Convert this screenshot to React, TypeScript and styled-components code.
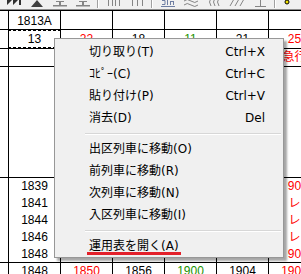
import React from 'react';
import styled, {createGlobalStyle} from 'styled-components';

const GlobalStyle = createGlobalStyle`
  html, body {
    margin: 0;
    padding: 0;
    background: #ffffff;
  }
  body {
    width: 301px;
    height: 274px;
    overflow: hidden;
    font-family: "Liberation Sans", Arial, sans-serif;
  }
`;

const Screen = styled.div`
  position: relative;
  width: 301px;
  height: 274px;
  overflow: hidden;
  background: #ffffff;
`;

const Toolbar = styled.div`
  height: 9px;
  padding-left: 2px;
  display: flex;
  align-items: flex-end;
  overflow: hidden;
  background: #f0f0f0;
  border-bottom: 1px solid #8c8c8c;
`;

const ToolButton = styled.div`
  flex: none;
  width: 23px;
  height: 20px;
  display: flex;
  align-items: center;
  justify-content: center;
`;

const ToolSep = styled.div`
  flex: none;
  width: 8px;
  height: 9px;
  display: flex;
  justify-content: center;
  &::before {
    content: '';
    width: 1px;
    height: 8px;
    background: #a0a0a0;
    border-right: 1px solid #ffffff;
  }
`;

const Sheet = styled.div`
  display: grid;
  grid-template-columns: 9px repeat(6, 52px);
  border-top: 1px solid #000;
  font-family: "Liberation Sans", Arial, "Noto Sans CJK JP", sans-serif;
  font-size: 12px;
`;

const Cell = styled.div<{$pad: number; $color: string; $focus?: boolean}>`
  position: relative;
  box-sizing: border-box;
  padding-top: ${p => p.$pad}px;
  border-right: 1px solid #000;
  border-bottom: 1px solid #000;
  color: ${p => p.$color};
  text-align: center;
  line-height: 17px;
  white-space: nowrap;
  overflow: hidden;
  &::after {
    content: '';
    display: ${p => (p.$focus ? 'block' : 'none')};
    position: absolute;
    left: -1px;
    right: -1px;
    top: 0;
    bottom: 0;
    border: 1px dashed #000;
  }
`;

const Menu = styled.div`
  position: absolute;
  left: 54px;
  top: 38px;
  width: 230px;
  box-sizing: border-box;
  padding: 2px 2px 0;
  background: #f0f0f0;
  border: 1px solid #979797;
  box-shadow: 3px 3px 2px rgba(0, 0, 0, 0.35);
  font-family: "DejaVu Sans", "Noto Sans CJK JP", sans-serif;
  font-size: 12px;
  color: #000;
`;

const MenuItem = styled.div`
  height: 22px;
  display: flex;
  align-items: center;
  justify-content: space-between;
  padding: 0 16px 0 32px;
  white-space: nowrap;
`;

const Label = styled.span<{$marked?: boolean}>`
  position: relative;
  display: inline-block;
  line-height: 14px;
  &::after {
    content: '';
    display: ${p => (p.$marked ? 'block' : 'none')};
    position: absolute;
    left: -2px;
    right: -2px;
    bottom: -2px;
    height: 3px;
    background: #e3202a;
  }
`;

const Shortcut = styled.span`
  line-height: 14px;
`;

const MenuSep = styled.div`
  height: 1px;
  margin: 4px 0 3px 28px;
  background: #d7d7d7;
  border-bottom: 1px solid #ffffff;
`;

const gray = '#858585';

const ToolIcon = ({kind}: {kind: string}) => {
  return (
    <svg width="16" height="16" viewBox="0 0 16 16">
      {kind === 'end' && (
        <g fill="#303030">
          <path d="M1 2 L7 8 L1 14 Z M7 2 L13 8 L7 14 Z" />
          <rect x="13" y="2" width="2" height="12" />
        </g>
      )}
      {kind === 'up' && <path d="M8 9 L14 16 L2 16 Z" fill="#404040" />}
      {kind === 'stack' && (
        <g fill={gray}>
          <rect x="4" y="10" width="8" height="1" />
          <rect x="7" y="10" width="2" height="4" />
          <rect x="1" y="14" width="14" height="1.5" />
        </g>
      )}
      {kind === 'bars4' && (
        <path d="M2.5 4v11 M6.5 4v11 M9.5 4v11 M13.5 4v11" stroke={gray} strokeWidth="1" />
      )}
      {kind === 'bars3' && (
        <path d="M3.5 4v11 M8.5 4v11 M13.5 4v11 M3 4.5h11" stroke={gray} strokeWidth="1" />
      )}
      {kind === 'lines' && (
        <g stroke="#6f7fa3" strokeWidth="1" fill="none">
          <path d="M2 9.5h3v4h-3 M7.5 8v6 M10.5 10v4 M13.5 10v4 M10 10.5h4" />
          <path d="M1 15.5h14" />
        </g>
      )}
      {kind === 'wave' && (
        <path d="M1 10q3 -3 7 0t7 0 M1 14q3 -3 7 0t7 0" stroke={gray} strokeWidth="1" fill="none" />
      )}
      {kind === 'arcs' && (
        <path d="M5 7q-3 4 0 8 M9 7q-3 4 0 8 M13 7q-3 4 0 8" stroke={gray} strokeWidth="1" fill="none" />
      )}
      {kind === 'slash' && (
        <path d="M1 15L5 8 M6 15L10 8 M11 15L15 8" stroke={gray} strokeWidth="1" fill="none" />
      )}
      {kind === 'tee' && <path d="M8.5 5v10 M3 15.5h11" stroke={gray} strokeWidth="1" fill="none" />}
      {kind === 'dot' && <circle cx="4" cy="11" r="2" fill="#f2e200" stroke="#000" strokeWidth="1" />}
    </svg>
  );
};

const tools = ['end', 'up', 'stack', 'stack', '|', 'bars4', 'bars3', '|', 'lines', 'wave', 'arcs', 'slash', 'tee', '|', 'dot'];

const toneColor: Record<string, string> = {
  k: '#000000',
  r: '#ff0000',
  g: '#1a9200',
};

interface CellData {
  lines: string[];
  tone?: string;
  focus?: boolean;
}

interface RowData {
  height: number;
  pad: number;
  cells: CellData[];
}

const e: CellData = {lines: []};

const sheetRows: RowData[] = [
  {height: 19, pad: 2, cells: [e, {lines: ['1813A']}, e, e, e, e, e]},
  {
    height: 19,
    pad: 1,
    cells: [
      e,
      {lines: ['13'], focus: true},
      {lines: ['22'], tone: 'r'},
      {lines: ['18']},
      {lines: ['11'], tone: 'g'},
      {lines: ['21']},
      {lines: ['25'], tone: 'r'},
    ],
  },
  {height: 18, pad: 0, cells: [e, e, e, e, e, e, {lines: ['急行'], tone: 'r'}]},
  {height: 111, pad: 0, cells: [e, e, e, e, e, e, e]},
  {
    height: 85,
    pad: 0,
    cells: [
      e,
      {lines: ['1839', '1841', '1844', '1846', '1848']},
      e,
      e,
      e,
      e,
      {lines: ['90', 'レ', 'レ', 'レ', '90'], tone: 'r'},
    ],
  },
  {
    height: 30,
    pad: 0,
    cells: [
      e,
      {lines: ['1848']},
      {lines: ['1850'], tone: 'r'},
      {lines: ['1856']},
      {lines: ['1900'], tone: 'g'},
      {lines: ['1904']},
      {lines: ['1909'], tone: 'r'},
    ],
  },
];

type MenuEntry = {label: string; shortcut?: string; marked?: boolean} | 'sep';

const menuEntries: MenuEntry[] = [
  {label: '切り取り(T)', shortcut: 'Ctrl+X'},
  {label: 'ｺﾋﾟｰ(C)', shortcut: 'Ctrl+C'},
  {label: '貼り付け(P)', shortcut: 'Ctrl+V'},
  {label: '消去(D)', shortcut: 'Del'},
  'sep',
  {label: '出区列車に移動(O)'},
  {label: '前列車に移動(R)'},
  {label: '次列車に移動(N)'},
  {label: '入区列車に移動(I)'},
  'sep',
  {label: '運用表を開く(A)', marked: true},
];

const App = () => {
  return (
    <Screen>
      <GlobalStyle />
      <Toolbar>
        {tools.map((kind, i) =>
          kind === '|' ? (
            <ToolSep key={i} />
          ) : (
            <ToolButton key={i}>
              <ToolIcon kind={kind} />
            </ToolButton>
          ),
        )}
      </Toolbar>
      <Sheet style={{gridTemplateRows: sheetRows.map(r => `${r.height}px`).join(' ')}}>
        {sheetRows.map((row, ri) =>
          row.cells.map((cell, ci) => (
            <Cell key={`${ri}-${ci}`} $pad={row.pad} $color={toneColor[cell.tone || 'k']} $focus={cell.focus}>
              {cell.lines.map((line, li) => (
                <div key={li}>{line}</div>
              ))}
            </Cell>
          )),
        )}
      </Sheet>
      <Menu>
        {menuEntries.map((entry, i) =>
          entry === 'sep' ? (
            <MenuSep key={i} />
          ) : (
            <MenuItem key={i}>
              <Label $marked={entry.marked}>{entry.label}</Label>
              {entry.shortcut && <Shortcut>{entry.shortcut}</Shortcut>}
            </MenuItem>
          ),
        )}
      </Menu>
    </Screen>
  );
};

export default App;
